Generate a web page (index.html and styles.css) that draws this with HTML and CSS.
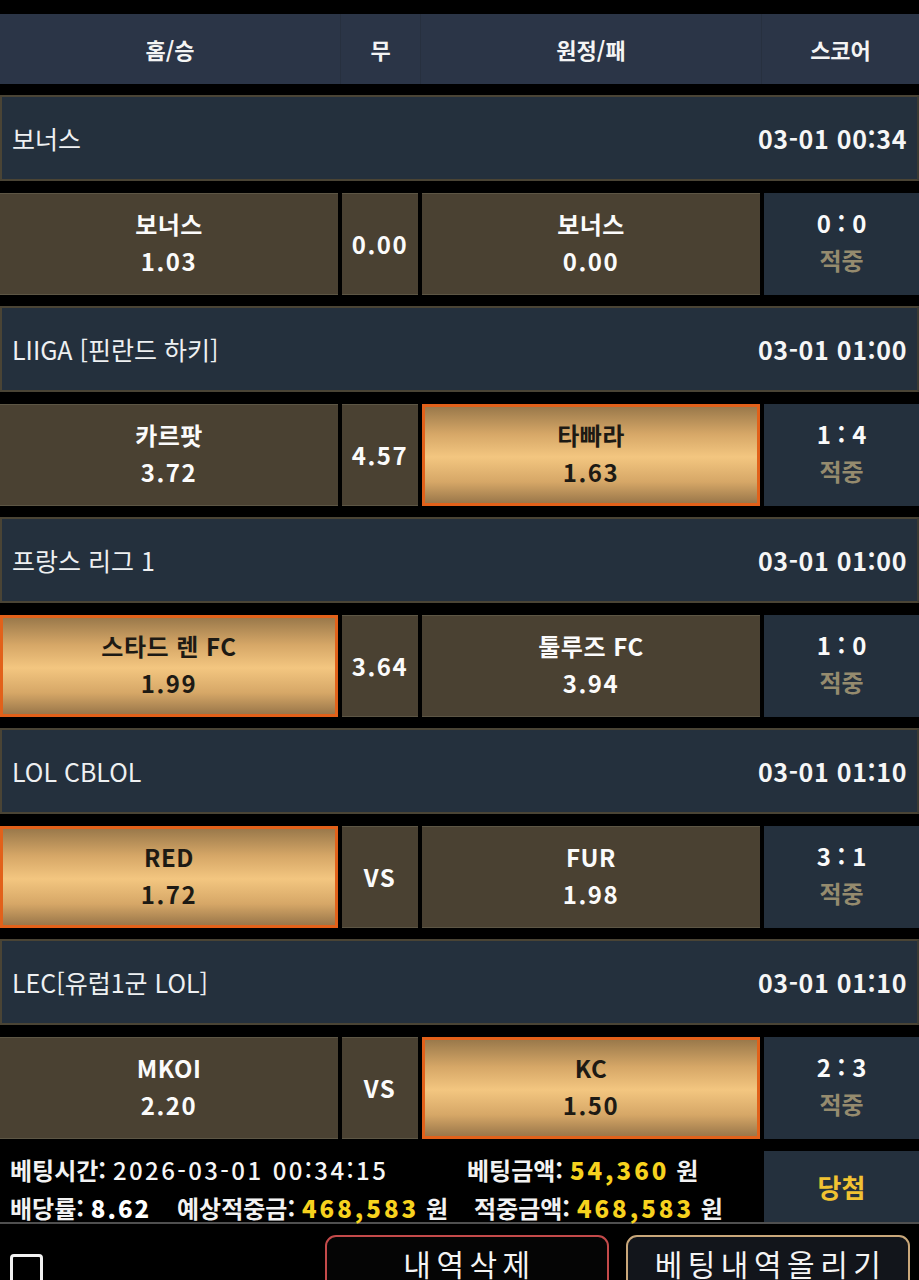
FILE: index.html
```html
<!DOCTYPE html>
<html lang="ko">
<head>
<meta charset="utf-8">
<link rel="stylesheet" href="styles.css">
</head>
<body>
<div class="page">
  <div class="head">
    <div class="hcell">홈/승</div>
    <div class="hcell">무</div>
    <div class="hcell">원정/패</div>
    <div class="hcell">스코어</div>
  </div>

  <div class="match">
    <div class="league"><span class="lname">보너스</span><span class="ltime">03-01 00:34</span></div>
    <div class="odds">
      <div class="cell"><div class="team">보너스</div><div class="num">1.03</div></div>
      <div class="cell draw"><div class="num">0.00</div></div>
      <div class="cell"><div class="team">보너스</div><div class="num">0.00</div></div>
      <div class="score"><div class="sc">0 : 0</div><div class="hit">적중</div></div>
    </div>
  </div>

  <div class="match">
    <div class="league"><span class="lname">LIIGA [핀란드 하키]</span><span class="ltime">03-01 01:00</span></div>
    <div class="odds">
      <div class="cell"><div class="team">카르팟</div><div class="num">3.72</div></div>
      <div class="cell draw"><div class="num">4.57</div></div>
      <div class="cell sel"><div class="team">타빠라</div><div class="num">1.63</div></div>
      <div class="score"><div class="sc">1 : 4</div><div class="hit">적중</div></div>
    </div>
  </div>

  <div class="match">
    <div class="league"><span class="lname">프랑스 리그 1</span><span class="ltime">03-01 01:00</span></div>
    <div class="odds">
      <div class="cell sel"><div class="team">스타드 렌 FC</div><div class="num">1.99</div></div>
      <div class="cell draw"><div class="num">3.64</div></div>
      <div class="cell"><div class="team">툴루즈 FC</div><div class="num">3.94</div></div>
      <div class="score"><div class="sc">1 : 0</div><div class="hit">적중</div></div>
    </div>
  </div>

  <div class="match">
    <div class="league"><span class="lname">LOL CBLOL</span><span class="ltime">03-01 01:10</span></div>
    <div class="odds">
      <div class="cell sel"><div class="team">RED</div><div class="num">1.72</div></div>
      <div class="cell draw"><div class="num">VS</div></div>
      <div class="cell"><div class="team">FUR</div><div class="num">1.98</div></div>
      <div class="score"><div class="sc">3 : 1</div><div class="hit">적중</div></div>
    </div>
  </div>

  <div class="match">
    <div class="league"><span class="lname">LEC[유럽1군 LOL]</span><span class="ltime">03-01 01:10</span></div>
    <div class="odds">
      <div class="cell"><div class="team">MKOI</div><div class="num">2.20</div></div>
      <div class="cell draw"><div class="num">VS</div></div>
      <div class="cell sel"><div class="team">KC</div><div class="num">1.50</div></div>
      <div class="score"><div class="sc">2 : 3</div><div class="hit">적중</div></div>
    </div>
  </div>

  <div class="summary">
    <div class="info">
      <div class="line l1">
        <span class="item i1"><b class="lab">베팅시간:</b> <span class="val">2026-03-01 00:34:15</span></span>
        <span class="item"><b class="lab">베팅금액:</b> <span class="yel">54,360</span> <b class="lab">원</b></span>
      </div>
      <div class="line l2">
        <span class="item i2"><b class="lab">배당률:</b> <span class="wb">8.62</span></span>
        <span class="item i3"><b class="lab">예상적중금:</b> <span class="yel">468,583</span> <b class="lab">원</b></span>
        <span class="item"><b class="lab">적중금액:</b> <span class="yel">468,583</span> <b class="lab">원</b></span>
      </div>
    </div>
    <div class="result">당첨</div>
  </div>

  <div class="actions">
    <div class="check"></div>
    <div class="btns">
      <button class="btn del">내역삭제</button>
      <button class="btn up">베팅내역올리기</button>
    </div>
  </div>
</div>
</body>
</html>
```

FILE: styles.css
```css
* { box-sizing: border-box; }
html, body {
  margin: 0;
  padding: 0;
  background: #000;
  font-family: "Noto Sans CJK KR", "Noto Sans", sans-serif;
  color: #fff;
}
.page {
  width: 919px;
  padding-top: 14px;
  overflow: hidden;
  height: 1280px;
}
.head {
  display: grid;
  grid-template-columns: 341px 80px 341px 1fr;
  height: 70px;
  background: #2b3547;
}
.hcell {
  display: flex;
  align-items: center;
  justify-content: center;
  font-weight: 700;
  font-size: 22px;
  color: #f4f4f4;
  border-right: 1px solid #27303f;
}
.hcell:last-child { border-right: none; }

.match {
  padding-top: 11px;
}
.league {
  height: 86px;
  background: #24303d;
  border: 2px solid #4a4435;
  border-right-color: #3a3a34;
  display: flex;
  align-items: center;
  justify-content: space-between;
  padding: 0 10px 0 10px;
}
.lname {
  font-size: 25px;
  font-weight: 400;
  color: #eef0f2;
}
.ltime {
  font-size: 25px;
  font-weight: 700;
  color: #f6f6f6;
  letter-spacing: 0.6px;
}
.odds {
  margin-top: 12px;
  height: 102px;
  display: grid;
  grid-template-columns: 338px 76px 338px 1fr;
  column-gap: 4px;
}
.cell {
  background: #4a4132;
  border-top: 1px solid #5d5645;
  border-bottom: 1px solid #5d5645;
  display: flex;
  flex-direction: column;
  align-items: center;
  justify-content: center;
  gap: 2px;
  padding-bottom: 4px;
  font-weight: 700;
  color: #fbfbfb;
}
.cell.draw { padding-bottom: 2px; }
.cell.sel {
  border: 3px solid #e2611a;
  background: linear-gradient(to bottom, #9a794b 0%, #d6a767 28%, #f3c680 52%, #d6a767 78%, #9a774a 100%);
  color: #1d1a14;
}
.team {
  font-size: 24px;
  line-height: 35px;
  letter-spacing: 0.5px;
}
.num {
  font-size: 24px;
  line-height: 35px;
  letter-spacing: 1.5px;
}
.score {
  background: #24303d;
  display: flex;
  flex-direction: column;
  align-items: center;
  justify-content: center;
  gap: 2px;
  padding-bottom: 6px;
  font-weight: 700;
}
.sc {
  font-size: 24px;
  line-height: 35px;
  color: #fafafa;
}
.hit {
  font-size: 24px;
  line-height: 35px;
  color: #958b6e;
}

.summary {
  display: flex;
  height: 85px;
  border-bottom: 2px solid #4f4f4f;
}
.info {
  flex: 1;
  padding: 11px 0 0 10px;
}
.line {
  display: flex;
  align-items: center;
  height: 38px;
  font-size: 24px;
  white-space: nowrap;
}
.i1 { width: 457px; }
.i2 { width: 167px; }
.i3 { width: 297px; }
.lab {
  font-weight: 700;
  color: #f2f2f2;
}
.val {
  font-weight: 500;
  color: #f6f6f6;
  letter-spacing: 2.4px;
}
.wb {
  font-weight: 900;
  color: #fff;
  letter-spacing: 2px;
}
.yel {
  font-weight: 900;
  color: #f7d21e;
  letter-spacing: 3px;
}
.result {
  width: 155px;
  margin-top: 12px;
  height: 71px;
  background: #24303d;
  display: flex;
  align-items: center;
  justify-content: center;
  font-size: 26px;
  font-weight: 700;
  color: #f1c232;
}

.actions {
  display: flex;
  align-items: flex-start;
  justify-content: space-between;
  padding: 11px 9px 0 10px;
}
.check {
  width: 33px;
  height: 33px;
  margin-top: 19px;
  border: 3px solid #f2f2f2;
  border-radius: 4px;
}
.btns {
  display: flex;
  gap: 17px;
}
.btn {
  width: 284px;
  height: 60px;
  border-radius: 11px;
  background: #050505;
  color: #f4f4f4;
  font-family: "Noto Sans CJK KR", "Noto Sans", sans-serif;
  font-size: 30px;
  font-weight: 400;
  letter-spacing: 5.5px;
  padding: 4px 0 0 5px;
  display: flex;
  justify-content: center;
  align-items: flex-start;
}
.btn.del { border: 2px solid #c44a4a; }
.btn.up { border: 2px solid #c9a77a; background: #12151b; }
```
